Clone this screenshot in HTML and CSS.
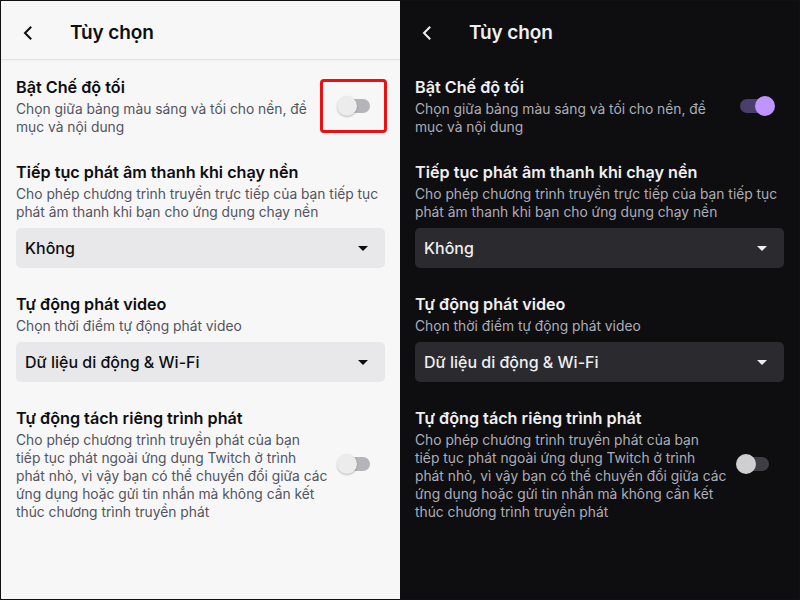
FILE: index.html
```html
<!DOCTYPE html>
<html lang="vi">
<head>
<meta charset="utf-8">
<title>Tùy chọn</title>
<link rel="stylesheet" href="styles.css">
</head>
<body>
<div class="frame">
  <section class="panel light">
    <header class="bar">
      <svg class="back" width="12" height="14" viewBox="0 0 12 14"><path d="M8.5 1.5 L3 7 L8.5 12.5" fill="none" stroke="currentColor" stroke-width="2" stroke-linecap="square"/></svg>
      <h1 class="title">Tùy chọn</h1>
    </header>
    <div class="content">
      <div class="item row">
        <div class="text">
          <div class="label">Bật Chế độ tối</div>
          <div class="desc">Chọn giữa bảng màu sáng và tối cho nền, đề<br>mục và nội dung</div>
        </div>
        <div class="switch off"><span class="track"></span><span class="knob"></span><span class="mark"></span></div>
      </div>
      <div class="item">
        <div class="label">Tiếp tục phát âm thanh khi chạy nền</div>
        <div class="desc">Cho phép chương trình truyền trực tiếp của bạn tiếp tục phát âm thanh khi bạn cho ứng dụng chạy nền</div>
        <div class="select"><span>Không</span><span class="caret"></span></div>
      </div>
      <div class="item">
        <div class="label">Tự động phát video</div>
        <div class="desc">Chọn thời điểm tự động phát video</div>
        <div class="select"><span>Dữ liệu di động &amp; Wi-Fi</span><span class="caret"></span></div>
      </div>
      <div class="item row">
        <div class="text">
          <div class="label">Tự động tách riêng trình phát</div>
          <div class="desc">Cho phép chương trình truyền phát của bạn<br>tiếp tục phát ngoài ứng dụng Twitch ở trình<br>phát nhỏ, vì vậy bạn có thể chuyển đổi giữa các<br>ứng dụng hoặc gửi tin nhắn mà không cần kết<br>thúc chương trình truyền phát</div>
        </div>
        <div class="switch off"><span class="track"></span><span class="knob"></span></div>
      </div>
    </div>
  </section>
  <section class="panel dark">
    <header class="bar">
      <svg class="back" width="12" height="14" viewBox="0 0 12 14"><path d="M8.5 1.5 L3 7 L8.5 12.5" fill="none" stroke="currentColor" stroke-width="2" stroke-linecap="square"/></svg>
      <h1 class="title">Tùy chọn</h1>
    </header>
    <div class="content">
      <div class="item row">
        <div class="text">
          <div class="label">Bật Chế độ tối</div>
          <div class="desc">Chọn giữa bảng màu sáng và tối cho nền, đề<br>mục và nội dung</div>
        </div>
        <div class="switch on"><span class="track"></span><span class="knob"></span></div>
      </div>
      <div class="item">
        <div class="label">Tiếp tục phát âm thanh khi chạy nền</div>
        <div class="desc">Cho phép chương trình truyền trực tiếp của bạn tiếp tục phát âm thanh khi bạn cho ứng dụng chạy nền</div>
        <div class="select"><span>Không</span><span class="caret"></span></div>
      </div>
      <div class="item">
        <div class="label">Tự động phát video</div>
        <div class="desc">Chọn thời điểm tự động phát video</div>
        <div class="select"><span>Dữ liệu di động &amp; Wi-Fi</span><span class="caret"></span></div>
      </div>
      <div class="item row">
        <div class="text">
          <div class="label">Tự động tách riêng trình phát</div>
          <div class="desc">Cho phép chương trình truyền phát của bạn<br>tiếp tục phát ngoài ứng dụng Twitch ở trình<br>phát nhỏ, vì vậy bạn có thể chuyển đổi giữa các<br>ứng dụng hoặc gửi tin nhắn mà không cần kết<br>thúc chương trình truyền phát</div>
        </div>
        <div class="switch off"><span class="track"></span><span class="knob"></span></div>
      </div>
    </div>
  </section>
</div>
</body>
</html>
```

FILE: styles.css
```css
* { box-sizing: border-box; }
html, body { margin: 0; padding: 0; }
body {
  width: 800px;
  height: 600px;
  overflow: hidden;
  font-family: Inter, "Noto Sans", "DejaVu Sans", sans-serif;
}
.frame {
  display: flex;
  width: 800px;
  height: 600px;
  border: 1px solid #111;
}
.panel {
  flex: 0 0 auto;
  height: 100%;
}
.panel.light { width: 399px; background: #f7f7f8; color: #0e0e10; }
.panel.dark { width: 399px; background: #0e0e10; color: #efeff1; }

.bar {
  height: 59px;
  display: flex;
  align-items: center;
  padding-left: 21px;
}
.light .bar {
  border-bottom: 1px solid #e2e2e4;
  box-shadow: 0 1px 2px rgba(0,0,0,0.04);
}
.dark .bar { border-bottom: 1px solid #0e0e10; }
.back { display: block; margin-top: 5px; }
.title {
  margin: 0 0 0 36px;
  font-size: 19px;
  font-weight: 600;
  line-height: 24px;
  margin-top: 5px;
  letter-spacing: -0.1px;
}

.content {
  padding: 16px 15px 0 15px;
  display: flex;
  flex-direction: column;
  gap: 25px;
}
.item.row {
  display: flex;
  align-items: center;
  gap: 6px;
}
.text { width: 316px; white-space: nowrap; }
.label {
  font-size: 16.2px;
  font-weight: 600;
  line-height: 22px;
}
.desc {
  margin-top: 2px;
  font-size: 13.8px;
  line-height: 18px;
}
.light .desc { color: #53535f; }
.dark .desc { color: #adadb8; }

.select {
  margin-top: 7px;
  height: 40px;
  border-radius: 5px;
  display: flex;
  align-items: center;
  justify-content: space-between;
  padding: 0 17px 0 9px;
  font-size: 16px;
  font-weight: 500;
}
.light .select { background: #e8e8ea; }
.dark .select { background: #2a2a2f; }
.caret {
  width: 0; height: 0;
  border-left: 5px solid transparent;
  border-right: 5px solid transparent;
  border-top: 5px solid currentColor;
}

.switch {
  position: relative;
  width: 48px;
  height: 20px;
  flex: 0 0 auto;
  margin-left: auto;
}
.track {
  position: absolute;
  left: 4px; top: 3px;
  width: 29px; height: 14px;
  border-radius: 7px;
}
.knob {
  position: absolute;
  top: 0;
  width: 20px; height: 20px;
  border-radius: 50%;
}
.switch.off .knob { left: 0; }
.switch.on .knob { left: 19px; }
.light .switch.off .track { background: #b4b4ba; }
.light .switch.off .knob { background: #ececec; box-shadow: 0 1px 2px rgba(0,0,0,0.25); }
.dark .switch.off .track { background: #3e3e44; }
.dark .switch.off .knob { background: #cfcfd1; }
.dark .switch.on .track { background: #4b3e6c; }
.dark .switch.on .knob { background: #bf94ff; }
.mark {
  position: absolute;
  left: -17px; top: -17px;
  width: 67px; height: 54px;
  border: 3px solid #ee1010;
  border-radius: 4px;
}
```
